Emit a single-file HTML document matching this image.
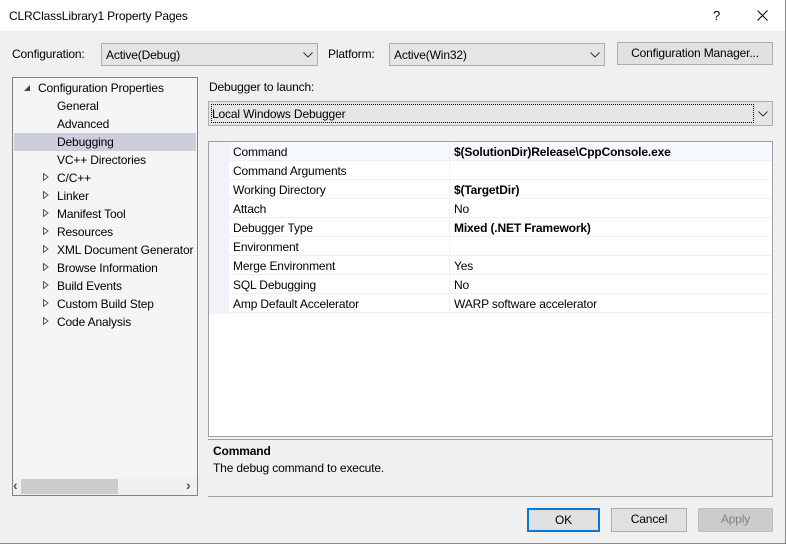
<!DOCTYPE html>
<html><head><meta charset="utf-8"><style>
*{margin:0;padding:0;box-sizing:border-box}
body{width:786px;height:544px;background:#f0f0f0;font-family:"Liberation Sans",sans-serif;font-size:12px;letter-spacing:-0.15px;color:#000;position:relative;overflow:hidden}
.a{position:absolute;white-space:nowrap}
.combo{position:absolute;background:#e5e5e5;border:1px solid #adadad}
.btn{position:absolute;background:#e1e1e1;border:1px solid #adadad;text-align:center;line-height:21px}
.chev{position:absolute;width:10px;height:6px}
.row{position:absolute;left:229px;width:543px;height:19px;border-bottom:1px solid #f0f0f0;background:#fff}
.row span{position:absolute;top:3px}
.row .v{left:225px}
.row .n{left:4px}
.row:after{content:"";position:absolute;left:220px;top:0;width:1px;height:19px;background:#f0f0f0}
.tri{position:absolute;left:43px;width:6px;height:8px}
</style></head><body>
<div class="a" style="left:0;top:0;width:786px;height:31px;background:#fff"></div>
<div class="a" style="left:9px;top:9px">CLRClassLibrary1 Property Pages</div>
<div class="a" style="left:713px;top:8px;font-size:13px">?</div>
<svg class="a" style="left:757px;top:10px" width="11" height="11"><path d="M0.5 0.5L10.5 10.5M10.5 0.5L0.5 10.5" stroke="#000" stroke-width="1"/></svg>
<div class="a" style="left:785px;top:0;width:1px;height:544px;background:#888"></div>
<div class="a" style="left:0;top:543px;width:786px;height:1px;background:#888"></div>

<div class="a" style="left:12px;top:47px">Configuration:</div>
<div class="combo" style="left:101px;top:43px;width:217px;height:23px"><span class="a" style="left:4px;top:4px">Active(Debug)</span>
<svg class="chev" style="left:201px;top:8px"><path d="M0.5 0.5L5 5L9.5 0.5" stroke="#333" fill="none"/></svg></div>
<div class="a" style="left:328px;top:47px">Platform:</div>
<div class="combo" style="left:389px;top:43px;width:216px;height:23px"><span class="a" style="left:4px;top:4px">Active(Win32)</span>
<svg class="chev" style="left:200px;top:8px"><path d="M0.5 0.5L5 5L9.5 0.5" stroke="#333" fill="none"/></svg></div>
<div class="btn" style="left:617px;top:42px;width:156px;height:23px">Configuration Manager...</div>

<div class="a" style="left:12px;top:77px;width:186px;height:419px;background:#f5f5f5;border:1px solid #828282"></div>
<svg class="a" style="left:23px;top:84px" width="8" height="8"><path d="M7 1L7 7L1 7Z" fill="#444"/></svg>
<div class="a" style="left:38px;top:81px">Configuration Properties</div>
<div class="a" style="left:14px;top:133px;width:182px;height:18px;background:#cccedb"></div>
<div class="a" style="left:57px;top:99px">General</div>
<div class="a" style="left:57px;top:117px">Advanced</div>
<div class="a" style="left:57px;top:135px">Debugging</div>
<div class="a" style="left:57px;top:153px">VC++ Directories</div>
<div class="a" style="left:57px;top:171px">C/C++</div>
<div class="a" style="left:57px;top:189px">Linker</div>
<div class="a" style="left:57px;top:207px">Manifest Tool</div>
<div class="a" style="left:57px;top:225px">Resources</div>
<div class="a" style="left:57px;top:243px">XML Document Generator</div>
<div class="a" style="left:57px;top:261px">Browse Information</div>
<div class="a" style="left:57px;top:279px">Build Events</div>
<div class="a" style="left:57px;top:297px">Custom Build Step</div>
<div class="a" style="left:57px;top:315px">Code Analysis</div>
<svg class="tri" style="top:173px"><path d="M0.5 0.5L5 4L0.5 7.5Z" fill="none" stroke="#555"/></svg>
<svg class="tri" style="top:191px"><path d="M0.5 0.5L5 4L0.5 7.5Z" fill="none" stroke="#555"/></svg>
<svg class="tri" style="top:209px"><path d="M0.5 0.5L5 4L0.5 7.5Z" fill="none" stroke="#555"/></svg>
<svg class="tri" style="top:227px"><path d="M0.5 0.5L5 4L0.5 7.5Z" fill="none" stroke="#555"/></svg>
<svg class="tri" style="top:245px"><path d="M0.5 0.5L5 4L0.5 7.5Z" fill="none" stroke="#555"/></svg>
<svg class="tri" style="top:263px"><path d="M0.5 0.5L5 4L0.5 7.5Z" fill="none" stroke="#555"/></svg>
<svg class="tri" style="top:281px"><path d="M0.5 0.5L5 4L0.5 7.5Z" fill="none" stroke="#555"/></svg>
<svg class="tri" style="top:299px"><path d="M0.5 0.5L5 4L0.5 7.5Z" fill="none" stroke="#555"/></svg>
<svg class="tri" style="top:317px"><path d="M0.5 0.5L5 4L0.5 7.5Z" fill="none" stroke="#555"/></svg>
<div class="a" style="left:13px;top:478px;width:184px;height:17px;background:#f0f0f0"></div>
<div class="a" style="left:21px;top:479px;width:97px;height:15px;background:#cdcdcd"></div>
<div class="a" style="left:13px;top:477px;color:#555;font-size:14px;font-weight:bold">‹</div>
<div class="a" style="left:186px;top:477px;color:#555;font-size:14px;font-weight:bold">›</div>

<div class="a" style="left:209px;top:80px">Debugger to launch:</div>
<div class="combo" style="left:208px;top:101px;width:565px;height:25px"><div class="a" style="left:2px;top:2px;width:543px;height:19px;border:1px dotted #000"></div><span class="a" style="left:3px;top:5px">Local Windows Debugger</span>
<svg class="chev" style="left:549px;top:9px"><path d="M0.5 0.5L5 5L9.5 0.5" stroke="#333" fill="none"/></svg></div>

<div class="a" style="left:208px;top:141px;width:565px;height:296px;background:#fff;border:1px solid #a0a0a0"></div>
<div class="a" style="left:209px;top:142px;width:20px;height:172px;background:#f0f4f9"></div>
<div class="row" style="top:142px;background:#f5f8fc"><span class="n">Command</span><span class="v"><b>$(SolutionDir)Release\CppConsole.exe</b></span></div>
<div class="row" style="top:161px"><span class="n">Command Arguments</span></div>
<div class="row" style="top:180px"><span class="n">Working Directory</span><span class="v"><b>$(TargetDir)</b></span></div>
<div class="row" style="top:199px"><span class="n">Attach</span><span class="v">No</span></div>
<div class="row" style="top:218px"><span class="n">Debugger Type</span><span class="v"><b>Mixed (.NET Framework)</b></span></div>
<div class="row" style="top:237px"><span class="n">Environment</span></div>
<div class="row" style="top:256px"><span class="n">Merge Environment</span><span class="v">Yes</span></div>
<div class="row" style="top:275px"><span class="n">SQL Debugging</span><span class="v">No</span></div>
<div class="row" style="top:294px"><span class="n">Amp Default Accelerator</span><span class="v">WARP software accelerator</span></div>

<div class="a" style="left:208px;top:439px;width:565px;height:58px;border-top:1px solid #a0a0a0;border-right:1px solid #a0a0a0;border-bottom:1px solid #a0a0a0"></div>
<div class="a" style="left:213px;top:444px"><b>Command</b></div>
<div class="a" style="left:213px;top:461px">The debug command to execute.</div>

<div class="btn" style="left:527px;top:508px;width:73px;height:24px;border:2px solid #0078d7;line-height:20px">OK</div>
<div class="btn" style="left:611px;top:508px;width:76px;height:24px">Cancel</div>
<div class="btn" style="left:698px;top:508px;width:75px;height:24px;background:#cccccc;border-color:#bfbfbf;color:#838383">Apply</div>
</body></html>
